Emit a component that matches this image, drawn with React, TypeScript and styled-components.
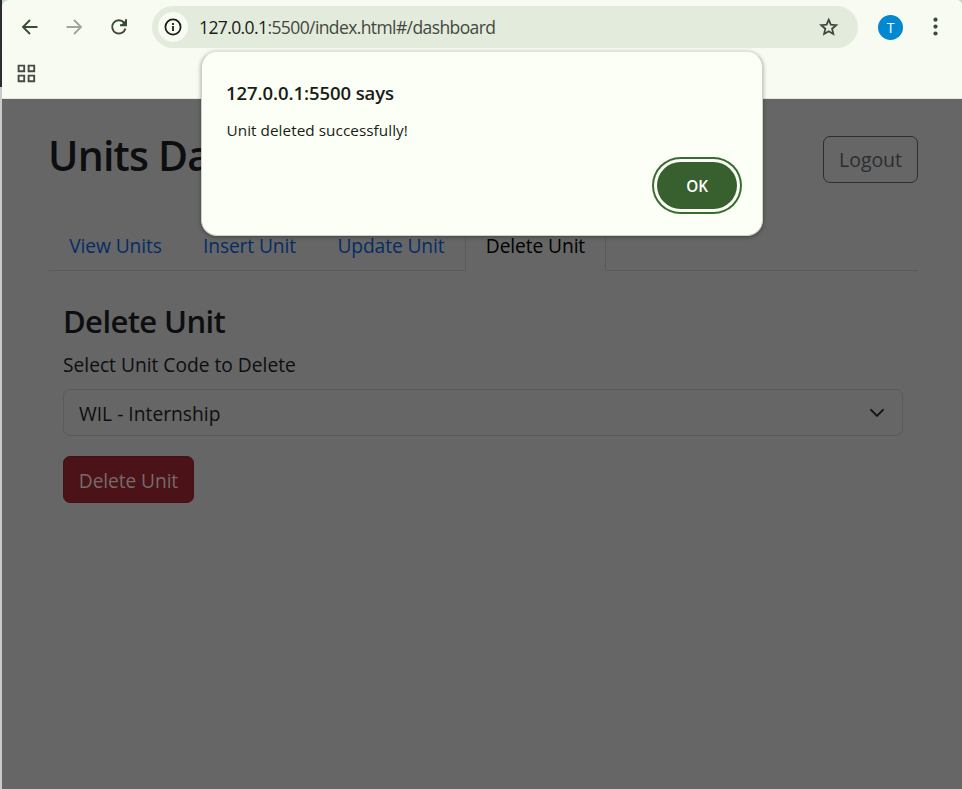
import React from "react";
import styled, { createGlobalStyle } from "styled-components";

const Global = createGlobalStyle`
  *, *::before, *::after { box-sizing: border-box; }
  body { margin: 0; overflow: hidden; font-family: "Open Sans", "Noto Sans", sans-serif; }
  h1, h2, p { margin: 0; }
  button { font-family: inherit; padding: 0; cursor: pointer; }
`;

const Desktop = styled.div`
  display: flex;
  width: 962px;
  height: 789px;
  background: #666;
`;
const Edge = styled.div`
  width: 2px;
  flex: none;
  background: linear-gradient(#2c2c33 0 87px, #c9cac9 87px);
`;
const Corner = styled.div`
  flex: 1;
  min-width: 0;
  background: linear-gradient(#c3dcbc 0 20px, #666 20px);
`;
const Window = styled.div`
  position: relative;
  height: 100%;
  display: flex;
  flex-direction: column;
  background: #f8fbf1;
  border-radius: 7px 5px 0 0;
  overflow: hidden;
`;
const Toolbar = styled.div`
  height: 54px;
  flex: none;
  display: flex;
  align-items: center;
  padding: 0 12px 0 14px;
`;
const IconButton = styled.button<{ $tone?: string; $gap?: number }>`
  width: 28px;
  height: 28px;
  border: 0;
  background: none;
  display: grid;
  place-items: center;
  color: ${(p) => p.$tone ?? "#3b4b38"};
  margin-right: ${(p) => p.$gap ?? 0}px;
`;
const AddressBar = styled.div`
  width: 706px;
  height: 42px;
  border-radius: 21px;
  background: #e3ebdc;
  display: flex;
  align-items: center;
  padding: 0 15px 0 6px;
  margin-right: 20px;
`;
const SiteInfo = styled.span`
  width: 30px;
  height: 30px;
  border-radius: 50%;
  background: #f8fbf1;
  display: grid;
  place-items: center;
  color: #1b1d1a;
  margin-right: 11px;
`;
const Url = styled.span`
  flex: 1;
  font-size: 17.5px;
  letter-spacing: -0.6px;
  line-height: 24px;
  color: #43483f;
  white-space: nowrap;
`;
const Host = styled.span`
  color: #1a1c18;
`;
const Avatar = styled.span`
  width: 25px;
  height: 25px;
  border-radius: 50%;
  background: #0288d1;
  color: #fff;
  font: 14px/25px "Open Sans", sans-serif;
  text-align: center;
  margin-right: 19px;
`;
const Bookmarks = styled.div`
  height: 45px;
  flex: none;
  border-top: 1px solid #f5f9ee;
  border-bottom: 1px solid #dde8d6;
  padding: 9px 0 0 15px;
  color: #474a45;
`;
const Page = styled.main`
  flex: 1;
  background: #666;
  padding: 37px 44px 0 47px;
  color: #0d0e10;
`;
const Header = styled.header`
  display: flex;
  justify-content: space-between;
  height: 86px;
`;
const Title = styled.h1`
  margin-left: -1px;
  font-size: 41px;
  line-height: 39px;
  font-weight: 560;
  letter-spacing: -0.8px;
  white-space: nowrap;
`;
const Logout = styled.button`
  width: 95px;
  height: 47px;
  border: 1px solid #2b2e31;
  border-radius: 7px;
  background: none;
  color: #2b2e31;
  font-size: 19.5px;
  letter-spacing: -0.05px;
`;
const Tabs = styled.nav`
  display: flex;
  height: 49px;
  border-bottom: 1px solid #595a5b;
`;
const Tab = styled.a<{ $width: number; $active?: boolean }>`
  width: ${(p) => p.$width}px;
  height: 49px;
  text-align: center;
  white-space: nowrap;
  font-size: 19.2px;
  line-height: 45px;
  letter-spacing: -0.1px;
  color: ${(p) => (p.$active ? "#000" : "#052c65")};
  border: 1px solid ${(p) => (p.$active ? "#595a5b" : "transparent")};
  border-bottom-color: ${(p) => (p.$active ? "#666" : "transparent")};
  border-radius: 7px 7px 0 0;
`;
const Form = styled.section`
  padding: 30px 15px 0 14px;
`;
const Heading = styled.h2`
  font-size: 31px;
  line-height: 40px;
  font-weight: 560;
  letter-spacing: -0.6px;
`;
const Label = styled.label`
  display: block;
  margin-top: 8px;
  height: 40px;
  font-size: 19.2px;
  line-height: 32px;
  letter-spacing: 0;
`;
const Select = styled.div`
  height: 47px;
  border: 1px solid #595a5b;
  border-radius: 7px;
  display: flex;
  align-items: center;
  justify-content: space-between;
  padding: 2px 17px 0 15px;
  font-size: 19.2px;
  letter-spacing: 0.02px;
`;
const DeleteButton = styled.button`
  margin-top: 20px;
  width: 131px;
  height: 47px;
  border: 1px solid #461116;
  border-radius: 7px;
  background: #4b1218;
  color: #746b6d;
  font-size: 19.2px;
  letter-spacing: -0.1px;
  padding-top: 2px;
`;
const Dialog = styled.div`
  position: absolute;
  left: 199px;
  top: 51px;
  width: 562px;
  height: 185px;
  border: 1px solid #cdd2c8;
  border-top-color: #dfe4da;
  border-radius: 16px;
  background: #fbfff5;
  box-shadow: 0 1px 4px rgba(0, 0, 0, 0.35);
  padding: 26px 25px 0 24px;
  display: flex;
  flex-direction: column;
  color: #1a1c18;
`;
const DialogTitle = styled.h2`
  font-size: 18.5px;
  line-height: 30px;
  font-weight: 600;
  letter-spacing: -0.08px;
`;
const Message = styled.p`
  margin-top: 10px;
  padding-left: 0.5px;
  font-size: 15.3px;
  line-height: 24px;
  letter-spacing: 0.05px;
`;
const OkButton = styled.button`
  align-self: flex-end;
  margin-top: 20px;
  width: 80px;
  height: 47px;
  border: 0;
  border-radius: 24px;
  background: #38602f;
  color: #fff;
  font-size: 15.3px;
  font-weight: 600;
  letter-spacing: -0.1px;
  padding-top: 1px;
  box-shadow: 0 0 0 3px #fbfff5, 0 0 0 5px #3a6b33;
`;

const Arrow = ({ flip = false }: { flip?: boolean }) => (
  <svg width="18" height="18" viewBox="0 0 18 18" fill="none" stroke="currentColor" strokeWidth="1.9">
    <path d={flip ? "M1.5 9h14M9 2l7 7-7 7" : "M16.5 9h-14M9 2L2 9l7 7"} />
  </svg>
);

export default function App() {
  return (
    <Desktop>
      <Global />
      <Edge />
      <Corner>
        <Window>
          <Toolbar>
            <IconButton aria-label="Back" $gap={16}><Arrow /></IconButton>
            <IconButton aria-label="Forward" $tone="#a1a69d" $gap={17}><Arrow flip /></IconButton>
            <IconButton aria-label="Reload" $gap={19}>
              <svg width="18" height="18" viewBox="0 0 18 18" fill="none" stroke="currentColor" strokeWidth="2">
                <path d="M15.4 10.5A6.7 6.7 0 1 1 14 4.5L15.5 6" />
                <path d="M16 1.3v6h-6" />
                <path d="M16 2v5h-5z" fill="currentColor" stroke="none" />
              </svg>
            </IconButton>
            <AddressBar>
              <SiteInfo>
                <svg width="18" height="18" viewBox="0 0 18 18" fill="none" stroke="currentColor" strokeWidth="1.8">
                  <circle cx="9" cy="9" r="7.6" />
                  <path d="M9 8v5M9 4.9v2" />
                </svg>
              </SiteInfo>
              <Url><Host>127.0.0.1</Host>:5500/index.html#/dashboard</Url>
              <IconButton aria-label="Bookmark" $tone="#41473e">
                <svg width="20" height="20" viewBox="0 0 20 20" fill="none" stroke="currentColor" strokeWidth="1.8">
                  <path d="M9.7 2.7l2.1 5 5.4.5-4.1 3.5 1.2 5.3-4.6-2.8L5.1 17l1.2-5.3-4.1-3.5 5.4-.5z" />
                </svg>
              </IconButton>
            </AddressBar>
            <Avatar>T</Avatar>
            <IconButton aria-label="Menu">
              <svg width="6" height="20" viewBox="0 0 6 20" fill="currentColor">
                <circle cx="2.5" cy="2.7" r="2.1" /><circle cx="2.5" cy="9.6" r="2.1" /><circle cx="2.5" cy="16.5" r="2.1" />
              </svg>
            </IconButton>
          </Toolbar>
          <Bookmarks>
            <svg width="19" height="19" viewBox="0 0 19 19" fill="none" stroke="currentColor" strokeWidth="1.9">
              <path d="M1.6 1.6h5.6v5.6H1.6zM11.6 1.6h5.6v5.6h-5.6zM1.6 11.6h5.6v5.6H1.6zM11.6 11.6h5.6v5.6h-5.6z" />
            </svg>
          </Bookmarks>
          <Page>
            <Header>
              <Title>Units Dashboard</Title>
              <Logout>Logout</Logout>
            </Header>
            <Tabs>
              <Tab $width={133}>View Units</Tab>
              <Tab $width={135}>Insert Unit</Tab>
              <Tab $width={148}>Update Unit</Tab>
              <Tab $width={141} $active>Delete Unit</Tab>
            </Tabs>
            <Form>
              <Heading>Delete Unit</Heading>
              <Label>Select Unit Code to Delete</Label>
              <Select>
                WIL - Internship
                <svg width="18" height="18" viewBox="0 0 18 18" fill="none" stroke="#101214" strokeWidth="1.9" strokeLinecap="round" strokeLinejoin="round">
                  <path d="M4 4.8l6 6 6-6" />
                </svg>
              </Select>
              <DeleteButton>Delete Unit</DeleteButton>
            </Form>
          </Page>
          <Dialog role="dialog">
            <DialogTitle>127.0.0.1:5500 says</DialogTitle>
            <Message>Unit deleted successfully!</Message>
            <OkButton>OK</OkButton>
          </Dialog>
        </Window>
      </Corner>
    </Desktop>
  );
}
